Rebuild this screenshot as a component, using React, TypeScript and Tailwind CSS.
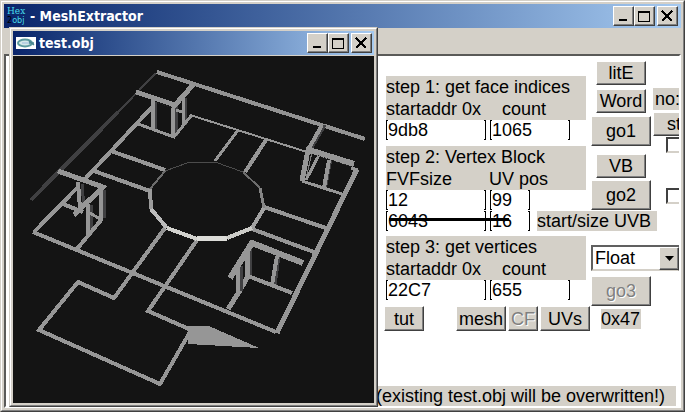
import React from "react";

const face =
  "bg-[#d4d0c8] border border-t-white border-l-white border-r-[#404040] border-b-[#404040] shadow-[inset_-1px_-1px_#808080]";

function CaptionButtons() {
  const base = `${face} flex h-5 w-[21px] items-center justify-center`;
  return (
    <div className="flex shrink-0 items-center">
      <button aria-label="Minimize" className={base}>
        <svg width="13" height="12" shapeRendering="crispEdges"><path d="M2 9h8v2H2z" /></svg>
      </button>
      <button aria-label="Maximize" className={base}>
        <svg width="13" height="12" shapeRendering="crispEdges">
          <path fillRule="evenodd" d="M0 1h12v11H0zM1 3h10v8H1z" />
        </svg>
      </button>
      <button aria-label="Close" className={`${base} ml-0.5`}>
        <svg width="13" height="12" shapeRendering="crispEdges" stroke="#000" strokeWidth="2">
          <path d="M1 1l10 10M11 1L1 11" />
        </svg>
      </button>
    </div>
  );
}

type Seg = [string, string, number];

const G = "#969696";
const D = "#404042";

const segments: Seg[] = [
  // outer walls
  ["M156 73L118 112", D, 2],
  ["M118 112L31 200", D, 4],
  ["M157 72L365 139", "#929292", 4],
  ["M190 115L307 152", G, 2],
  ["M153 106L85 179", G, 4],
  ["M78 187L34 232", G, 4],
  ["M33 232L276 332", G, 4],
  ["M357 169L277 333", G, 5],
  // inner walls
  ["M111 151L165 170", G, 4],
  ["M94 171L150 191", G, 4],
  ["M238 130L215 161", G, 3],
  ["M266 140L245 172", G, 4],
  ["M264 207L326 228", G, 4],
  ["M252 229L314 252", G, 4],
  ["M165 228L114 298L78 282L39 330L160 384L190 332", G, 4],
  ["M189 329L148 311L197 240", G, 4],
  // top tower
  ["M155 102V130", D, 3],
  ["M153 100V130", G, 4],
  ["M176 106V136", D, 3],
  ["M173 104V137", G, 4],
  ["M185 98V125", D, 3],
  ["M183 98V125", G, 3],
  ["M136 92L175 105L193 85", G, 5],
  ["M138 124L174 137L191 116", G, 3],
  ["M176 110L182 112", G, 3],
  // left tower
  ["M82 184L84 208", D, 3],
  ["M78 182L80 208", G, 4],
  ["M104 190L105 218", D, 3],
  ["M101 190V220", G, 4],
  ["M91 205V234", D, 3],
  ["M88 204V236", G, 4],
  ["M58 171L103 187L74 215", G, 5],
  ["M63 204L83 212", G, 4],
  ["M90 213L100 219", G, 3],
  ["M102 219L77 249", G, 4],
  // right tower
  ["M325 125L311 149", D, 3],
  ["M322 125L308 150", G, 4],
  ["M308 150L302 181", G, 5],
  ["M312 152L306 179", "#7e7e7e", 1],
  ["M319 155L306 180", G, 3],
  ["M331 161L326 188", D, 2],
  ["M329 160L324 188", G, 4],
  ["M306 149L354 164", G, 6],
  ["M302 181L342 194", G, 3],
  ["M351 168L358 170", G, 3],
  // lower tower
  ["M279 256L275 285", D, 3],
  ["M277 256L272 285", G, 4],
  ["M251 249L250 276", D, 3],
  ["M248 250L247 278L239 292L228 309", G, 5],
  ["M241 266V291", D, 3],
  ["M238 264V291", G, 4],
  ["M303 263L252 243L230 278", G, 6],
  ["M248 276L292 293", G, 4],
  // central ring
  ["M165 171L187 163L215 162L243 172", "#4c4c4c", 1],
  ["M165 171L150 189", "#6c6c6c", 2],
  ["M243 172L260 188", "#6c6c6c", 2],
  ["M260 188L264 208", "#868686", 3],
  ["M264 208L252 228", "#a2a2a2", 4],
  ["M150 189L151 209", "#9c9c9c", 4],
  ["M151 209L167 228", "#bcbcbc", 4],
  ["M167 228L197 239", "#d2d2ce", 4],
  ["M197 239L227 238", "#dcdcd8", 5],
  ["M227 238L252 228", "#ccccc8", 4],
];

function Mesh() {
  return (
    <svg
      viewBox="13 56 361 347"
      preserveAspectRatio="xMinYMin meet"
      className="block w-full bg-[#141414]"
      shapeRendering="crispEdges"
      fill="none"
      role="img"
      aria-label="test.obj mesh"
    >
      {segments.map(([d, stroke, w]) => (
        <path key={d} d={d} stroke={stroke} strokeWidth={w} />
      ))}
      <path d="M158 103L173 108M316 155L352 167" stroke="#222" strokeDasharray="1 1" />
      <path d="M188 326H209L259 348L188 344Z" fill={G} />
    </svg>
  );
}

function MeshWindow() {
  return (
    <section className="absolute top-[26px] left-2 w-[369px] border border-t-[#d4d0c8] border-l-[#d4d0c8] border-r-[#404040] border-b-[#404040]">
      <div className="border border-t-white border-l-white border-r-[#808080] border-b-[#808080] bg-[#d4d0c8] p-0.5">
        <header className="mb-px flex h-6 items-center bg-linear-to-r from-[#0a246a] to-[#a6caf0] pr-0.5 pl-[3px]">
          <svg width="20" height="12" className="shrink-0" aria-hidden="true">
            <rect width="20" height="12" fill="#fff" />
            <ellipse cx="9" cy="6" rx="7" ry="3.5" fill="#d5e8e8" stroke="#5b9a9e" strokeWidth="2" />
            <path d="M6 6h12M13 4l5 4" stroke="#4a8790" strokeWidth="1.5" />
            <path d="M6 5h7v2H6z" fill="#b9d2e2" />
          </svg>
          <h2 className="ml-[3px] flex-1 font-['DejaVu_Sans_Condensed','DejaVu_Sans',sans-serif] text-[14px] leading-6 font-bold text-white">
            test.obj
          </h2>
          <CaptionButtons />
        </header>
        <Mesh />
      </div>
    </section>
  );
}

function Field({ id, label, value, width }: { id: string; label?: string; value: string; width: string }) {
  return (
    <div className={`flex h-5 ${width}`}>
      <span className="w-0.5 border-y border-l border-black" />
      <input id={id} aria-label={label} defaultValue={value} className="min-w-0 flex-1 bg-white leading-5 outline-none" />
      <span className="w-0.5 border-y border-r border-black" />
    </div>
  );
}

function StepHeader({ title, a, b, idA, idB, pad }: { title: string; a: string; b: string; idA: string; idB: string; pad: string }) {
  return (
    <div className="w-[200px] bg-[#d4d0c8] leading-[22px]">
      <h3>{title}</h3>
      <div className="flex">
        <label htmlFor={idA} className="w-[103px]">{a}</label>
        <label htmlFor={idB} className={pad}>{b}</label>
      </div>
    </div>
  );
}

function Btn({ children, size, disabled }: { children: React.ReactNode; size: string; disabled?: boolean }) {
  return (
    <button
      disabled={disabled}
      className={`${face} ${size} flex shrink-0 items-center justify-center overflow-hidden leading-5 whitespace-nowrap disabled:text-[#808080] disabled:[text-shadow:1px_1px_#fff]`}
    >
      {children}
    </button>
  );
}

function Check({ label }: { label: string }) {
  return (
    <input
      type="checkbox"
      aria-label={label}
      className="block h-4 w-5 appearance-none border-2 border-t-[#404040] border-r-[#d4d0c8] border-b-[#d4d0c8] border-l-[#404040] bg-white"
    />
  );
}

export default function App() {
  return (
    <main className="relative flex min-h-screen flex-col border border-t-[#d4d0c8] border-l-[#d4d0c8] border-r-[#404040] border-b-[#404040] bg-[#d4d0c8] font-['Liberation_Sans',Arial,sans-serif] text-[18px] text-black">
      <div className="flex flex-1 flex-col border border-t-white border-l-white border-r-[#808080] border-b-[#808080] p-0.5">
        <header className="flex h-6 items-center bg-linear-to-r from-[#0a246a] to-[#a6caf0] pr-[3px] pl-[3px]">
          <div className="w-5 shrink-0 font-['DejaVu_Serif',serif] text-[9px] leading-[9px] text-[#48dcea]" aria-hidden="true">
            <div>Hex</div>
            <div className="font-['DejaVu_Sans_Condensed',sans-serif]"><span className="text-black">2</span>obj</div>
          </div>
          <h1 className="ml-[3px] flex-1 font-['DejaVu_Sans_Condensed','DejaVu_Sans',sans-serif] text-[14px] leading-6 font-bold text-white">
            - MeshExtractor
          </h1>
          <CaptionButtons />
        </header>
        <div className="h-[26px]" />
        <div className="flex flex-1 flex-col overflow-hidden border-2 border-t-[#5a5a58] border-r-white border-b-white border-l-[#5a5a58] bg-white pl-[370px]">
          <div className="flex pl-2">
            <form className="w-[207px] shrink-0 pt-5">
              <div className="pl-0.5">
                <StepHeader title="step 1: get face indices" a="startaddr 0x" b="count" idA="faceAddr" idB="faceCount" pad="pl-[13px]" />
                <div className="mb-1.5 flex gap-1">
                  <Field id="faceAddr" value="9db8" width="w-[100px]" />
                  <Field id="faceCount" value="1065" width="w-20" />
                </div>
                <StepHeader title="step 2: Vertex Block" a="FVFsize" b="UV pos" idA="fvf" idB="uvpos" pad="pl-0" />
                <div className="mb-px flex gap-1">
                  <Field id="fvf" value="12" width="w-[100px]" />
                  <Field id="uvpos" value="99" width="w-10" />
                </div>
                <div className="relative mb-[5px] flex w-[271px] gap-1">
                  <Field id="uvbStart" label="UVB start" value="6043" width="w-[100px]" />
                  <Field id="uvbSize" label="UVB size" value="16" width="w-10" />
                  <span className="ml-[3px] h-5 flex-1 bg-[#d4d0c8] leading-5 whitespace-nowrap">start/size UVB</span>
                  <span className="absolute top-[7px] left-[3px] h-[3px] w-[120px] bg-black" />
                </div>
                <StepHeader title="step 3: get vertices" a="startaddr 0x" b="count" idA="vertAddr" idB="vertCount" pad="pl-[13px]" />
                <div className="mb-1.5 flex gap-1">
                  <Field id="vertAddr" value="22C7" width="w-[100px]" />
                  <Field id="vertCount" value="655" width="w-20" />
                </div>
              </div>
              <div className="flex w-[258px] items-center">
                <Btn size="h-[25px] w-10">tut</Btn>
                <div className="ml-8 flex gap-0.5">
                  <Btn size="h-[25px] w-[50px]">mesh</Btn>
                  <Btn size="h-[25px] w-[30px]" disabled>CF</Btn>
                  <Btn size="h-[25px] w-[50px]">UVs</Btn>
                </div>
                <span className="ml-[11px] h-5 w-10 shrink-0 bg-[#d4d0c8] leading-5">0x47</span>
              </div>
            </form>
            <div className="min-w-0 flex-1 pt-[5px]">
              <div className="flex">
                <div className="flex w-[60px] shrink-0 flex-col items-center">
                  <Btn size="mb-1 h-6 w-[50px]">litE</Btn>
                  <Btn size="mb-[3px] h-6 w-[50px]">Word</Btn>
                  <Btn size="mb-2 h-[30px] w-[60px]">go1</Btn>
                  <Btn size="mb-[2px] h-6 w-[50px]">VB</Btn>
                  <Btn size="h-[30px] w-[60px]">go2</Btn>
                </div>
                <div className="flex min-w-0 flex-1 flex-col overflow-hidden pt-[27px] pl-0.5">
                  <span className="mb-0.5 h-[22px] bg-[#d4d0c8] pl-0.5 leading-[22px] whitespace-nowrap">no:</span>
                  <button className={`${face} h-6 w-10 pl-0.5 text-center leading-5`}>st</button>
                  <div className="flex flex-col gap-[35px] pt-px pl-[13px]">
                    <Check label="first option" />
                    <Check label="second option" />
                  </div>
                </div>
              </div>
              <div className="relative mt-[35px] mb-[5px] max-w-[88px]">
                <select
                  aria-label="Number format"
                  className="block h-[26px] w-full appearance-none border-2 border-t-[#606060] border-r-[#606060] border-b-[#d4d0c8] border-l-[#606060] bg-white pl-0.5 leading-5 outline-none"
                >
                  <option>Float</option>
                  <option>Half</option>
                </select>
                <span className={`${face} pointer-events-none absolute top-0.5 right-0 flex h-[23px] w-5 items-center justify-center`}>
                  <svg width="9" height="5"><path d="M0 0h9L4.5 5z" /></svg>
                </span>
              </div>
              <Btn size="h-[30px] w-[60px]" disabled>go3</Btn>
            </div>
          </div>
          <p className="mt-auto h-5 w-[300px] bg-[#d4d0c8] leading-5 whitespace-nowrap">(existing test.obj will be overwritten!)</p>
        </div>
      </div>
      <MeshWindow />
    </main>
  );
}
